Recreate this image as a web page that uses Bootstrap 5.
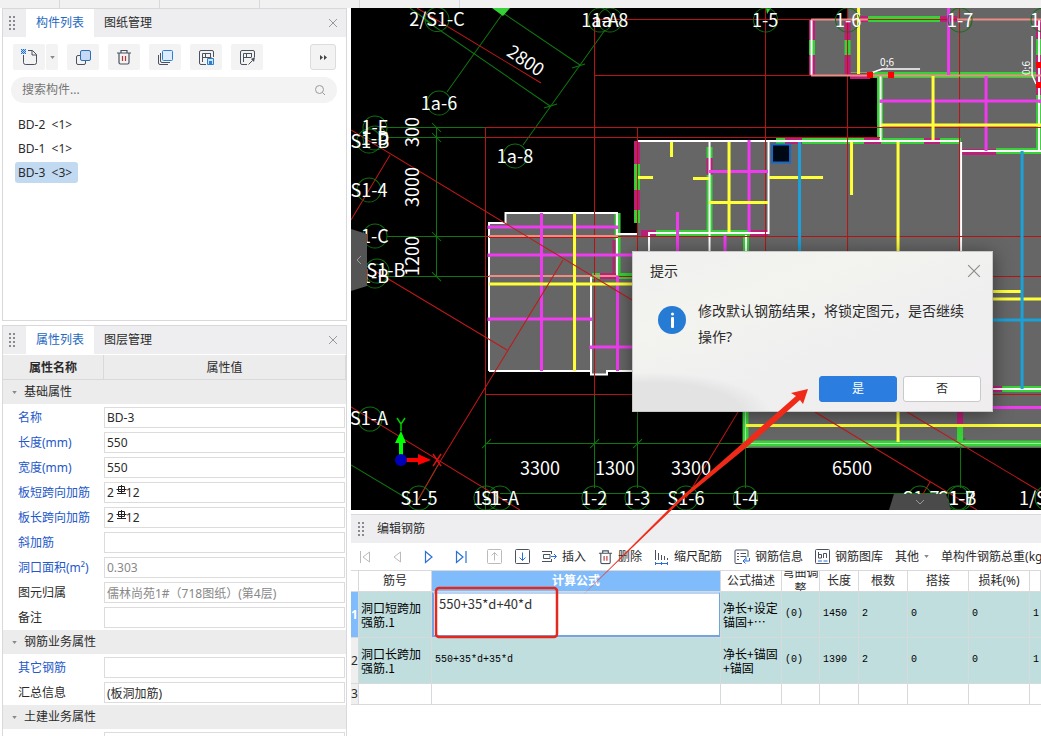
<!DOCTYPE html>
<html lang="zh-CN">
<head>
<meta charset="utf-8">
<meta name="viewport" content="width=device-width, initial-scale=1">
<title>编辑钢筋</title>
<link href="https://cdn.jsdelivr.net/npm/bootstrap@5.3.0/dist/css/bootstrap.min.css" rel="stylesheet">
<style>
:root{--ui:"Noto Sans","Noto Sans CJK SC",sans-serif;--line:#d9d9dc;--bar:#eeeef1}
body{font:12px/24px var(--ui);color:#2b2b2b;background:#fff}
button,input{font:inherit;color:inherit}
svg{display:block;flex:none}
.app{height:100vh;min-height:600px}
.ribbon{height:8px;background:#f1f1f1;flex:none}
.ribbon i{width:100px;border-right:1px solid var(--line)}
.ribbon i:first-child{width:60px}
.side{width:345px;margin-left:2px;flex:none;gap:4px}
.panel{border:1px solid var(--line)}
.components{flex:0 0 313px}
.panel-head{background:var(--bar);height:28px;padding-left:6px;flex:none}
.tab-item{border:0;background:none;padding:0 10px;height:28px;line-height:28px}
.tab-item.on{background:#fff;color:#2468c0;margin-left:11px}
.bare{border:0;background:none;padding:0}
.tools{gap:9px;padding:7px 10px}
.tool{width:32px;height:26px;border:0;border-radius:2px;background:#f3f3f3;padding:0;display:flex;align-items:center;justify-content:center}
.tool.narrow{width:12px}
.tool.more{width:26px;border:1px solid #dcdcdc;border-radius:3px}
.search{background:#f3f3f3;border-radius:13px;height:26px;margin:0 9px 0 8px;padding:0 11px}
.search input{border:0;background:none;outline:0;padding:0}
.search input::placeholder{color:#757575;opacity:1}
.names{padding:10px 12px;margin:0}
.names button{border:0;background:none;border-radius:3px;padding:0 6px 0 3px;height:21px;line-height:21px}
.names li{height:24px}
.names .on{background:#c1d9f1}
.props{table-layout:fixed;width:100%;border-collapse:separate;border-spacing:0;margin-top:1px}
.props col:first-child{width:101px}
.props thead th{height:25px;line-height:22px;padding:2px 0 0;background:#ececec;border:1px solid var(--line);border-width:0 1px 1px 0;text-align:center;font-weight:400}
.props thead th:first-child{font-weight:700}
.props tbody th{font-weight:400;height:25px;padding:0 0 0 15px;color:#2458c8;white-space:nowrap}
.props tbody th.plain{color:#2b2b2b}
.props tbody th.group{padding:0;color:#2b2b2b}
.group div{background:#ececec;height:24px;margin-bottom:1px;padding-left:9px;gap:7px}
.props td{padding:0 1px 0 0;height:25px}
.props input{display:block;width:100%;height:21px;border:1px solid #dcdcdc;border-radius:0;padding:0 2px;line-height:18px;background:#fff;outline:0}
.props input:read-only{color:#888}
.props input.steel{padding-bottom:2px}
.steel-sign{position:absolute;left:12px;top:3px}
.work{margin-left:4px;min-width:0}
.view{background:#000;min-height:0;overflow:hidden}
.cad{width:100%;height:100%}
.cad text{font:18px "Noto Sans CJK SC",sans-serif;fill:#fff;text-anchor:middle}
.fold-left{position:absolute;left:0;top:221px;width:16px;height:62px;border:0;padding:0;background:#545454;color:#999;clip-path:polygon(0 0,100% 8%,100% 92%,0 100%)}
.fold-bottom{position:absolute;left:538px;bottom:0;width:62px;height:16px;border:0;padding:0;background:#4a4a4a;clip-path:polygon(8% 0,92% 0,100% 100%,0 100%)}
.ask{position:absolute;left:281px;top:243px;width:361px;height:161px;border:1px solid #c8c8c8;box-shadow:0 3px 18px rgba(0,0,0,.45);background:radial-gradient(ellipse 116px 42px at 6% 102%,#e3e3e4 75%,transparent 100%),linear-gradient(160deg,#f0f0f0,#f3f3ef 30%,#efeff0 60%,#f0edef);padding:8px 11px 9px 17px;font-size:14px}
.ask p{line-height:26px;margin:0;width:270px}
.ask .choice{width:78px;height:26px;line-height:24px;border:1px solid #c9c9c9;border-radius:3px;background:#fff;font-size:12px;padding:0}
.ask .choice.yes{background:#2b7de0;border-color:#2b7de0;color:#fff}
.editor{flex:0 0 226px;padding-top:4px;overflow:hidden}
.editor-head{height:29px;background:var(--bar);border-top:1px solid var(--line);padding-left:7px;gap:12px}
.cmds{height:27px;white-space:nowrap;overflow:hidden;padding-left:8px}
.cmd{border:0;background:none;padding:0;display:flex;align-items:center;gap:5px;margin-right:12px;flex:none}
.nav-tools{gap:20px;margin-right:11px;flex:none}
.bars{table-layout:fixed;width:100%;border-collapse:separate;border-spacing:0;border-top:1px solid var(--line);line-height:14px}
.bars th,.bars td{border:1px solid #d6dadb;border-width:0 1px 1px 0;padding:0 2px;overflow:hidden;font-weight:400}
.bars thead th{height:21px;text-align:center;padding:0}
.bars thead th.now{background:#80bbfb;color:#fff;font-weight:700}
.bars .clip{height:20px;line-height:16px;overflow:hidden}
.bars tbody tr{height:46px}
.bars tbody tr:last-child{height:21px}
.bars tbody th{background:#efefef;padding:0;text-align:center;font-family:var(--ui)}
.bars tbody th.now{background:#80bbfb;color:#fff;font-weight:700}
.bars .filled td{background:#c1dedf;color:#000;font-family:"Noto Sans CJK SC",sans-serif}
.bars .filled td.num{font:10px/14px "Liberation Mono",monospace;padding:0 0 2px 3px;white-space:nowrap}
.bars .filled td.edit{background:#fff;padding:0}
.edit input{display:block;width:100%;height:45px;border:2px solid #6fa5e0;border-right-width:1px;border-top-color:#b9d3f0;padding:0 5px 23px;background:#fff;outline:0;color:#333;font-size:13px}
.marks{position:absolute;left:0;top:0;width:690px;height:728px;pointer-events:none;z-index:5}
</style>
</head>
<body>
<svg width="0" height="0" class="position-absolute" aria-hidden="true"><defs>
<symbol id="grip" viewBox="0 0 7 15"><path d="M0 0h2v2H0zM4 0h2v2H4zM0 4h2v2H0zM4 4h2v2H4zM0 8h2v2H0zM4 8h2v2H4zM0 12h2v2H0zM4 12h2v2H4z" fill="#8a8a8f"/></symbol>
<symbol id="close" viewBox="0 0 10 10"><path d="M1 1l8 8M9 1L1 9" stroke="#999" fill="none"/></symbol>
<symbol id="down" viewBox="0 0 6 4"><path d="M0 0h6L3 4z" fill="#888"/></symbol>
<symbol id="bin" viewBox="0 0 16 16"><path d="M1 4h14M5 4V1.500h6V4M3 4v9.500q0 1.500 1.500 1.500h7q1.500 0 1.500-1.500V4" fill="none" stroke="#4a5260" stroke-width="1.200"/><path d="M6.500 7v5M9.500 7v5" stroke="#c03030" stroke-width="1.200"/></symbol>
<symbol id="steel" viewBox="0 0 11 11"><path d="M5.500 0v9M1 8.500h9M.5 4.500h10M2.500 1.500h6v5h-6z" fill="none" stroke="#222"/></symbol>
</defs></svg>

<div class="app d-flex flex-column overflow-hidden">
<div class="ribbon d-flex"><i></i><i></i><i></i><i></i><i></i></div>
<div class="d-flex flex-grow-1" style="min-height:0">

<aside class="side d-flex flex-column">
  <section class="panel components">
    <div class="panel-head d-flex align-items-center">
      <svg width="7" height="15"><use href="#grip"/></svg>
      <button class="tab-item on" type="button" style="margin-left:10px">构件列表</button>
      <button class="tab-item" type="button">图纸管理</button>
      <button class="bare ms-auto me-1 px-1" type="button" aria-label="关闭"><svg width="10" height="10"><use href="#close"/></svg></button>
    </div>
    <div class="tools d-flex">
      <div class="d-flex gap-0">
        <button class="tool me-0" type="button" aria-label="新建"><svg width="18" height="18" fill="none"><path d="M3.500 7v7.500q0 2 2 2h9q2 0 2-2V6.500l-4-4H8M12 2.500v4.500h4.500" stroke="#4a5260"/><path d="M1 1h5v5H1z" fill="#b4d2f4"/><path d="M1 1h1v1H1zM3 1h1v1H3zM5 1h1v1H5zM2 2h1v1H2zM4 2h1v1H4zM1 3h1v1H1zM3 3h1v1H3zM5 3h1v1H5zM2 4h1v1H2zM4 4h1v1H4zM1 5h1v1H1zM3 5h1v1H3zM5 5h1v1H5z" fill="#2a70c8"/></svg></button>
        <button class="tool narrow" type="button" aria-label="更多新建" style="margin-left:1px"><svg width="5" height="3"><use href="#down"/></svg></button>
      </div>
      <button class="tool" type="button" aria-label="复制"><svg width="17" height="17" fill="none"><rect x="1.500" y="6.500" width="9" height="9" rx="1.500" stroke="#4a5260"/><rect x="5.500" y="1.500" width="10" height="10" rx="1.500" fill="#c3d9f5" stroke="#2f6db8"/></svg></button>
      <button class="tool" type="button" aria-label="删除"><svg width="16" height="16"><use href="#bin"/></svg></button>
      <button class="tool" type="button" aria-label="层间复制"><svg width="17" height="17" fill="none"><rect x="5.500" y="1.500" width="10" height="10" rx="1" fill="#dcecfc" stroke="#2f7fd0"/><path d="M3.500 4v8q0 1.500 1.500 1.500h8M1.500 6v8q0 1.500 1.500 1.500h8" stroke="#4a5260"/></svg></button>
      <button class="tool" type="button" aria-label="构件存档"><svg width="17" height="17" fill="none"><path d="M8 15.500H3q-1.500 0-1.500-1.500V3Q1.500 1.500 3 1.500h11q1.500 0 1.500 1.500v5M4.500 13V4.500H13M4.500 8.500H8M7.500 4.500v4h6M12.500 4v4" stroke="#4a5260"/><path d="M9.500 9.500h6v6h-6z" fill="#cfe4fb" stroke="#2f7fd0"/><path d="M11 12h3v3h-3z" fill="#2f7fd0"/></svg></button>
      <button class="tool" type="button" aria-label="构件提取"><svg width="17" height="17" fill="none"><path d="M8 15.500H3q-1.500 0-1.500-1.500V3Q1.500 1.500 3 1.500h11q1.500 0 1.500 1.500v5M4.500 13V4.500H13M4.500 8.500H8M7.500 4.500v4h5M12.500 4v4M9.500 15.500l4-4" stroke="#4a5260"/><path d="M12 10l4-2-1 5z" fill="#4a5260"/></svg></button>
      <button class="tool more ms-auto" type="button" aria-label="展开"><svg width="9" height="5"><path d="M1 0l3 2.500L1 5zM5 0l3 2.500L5 5z" fill="#444"/></svg></button>
    </div>
    <div class="search d-flex align-items-center justify-content-between">
      <input type="text" placeholder="搜索构件..." aria-label="搜索构件">
      <svg width="12" height="12" fill="none" stroke="#9a9a9a"><circle cx="5.500" cy="5.500" r="4"/><path d="M8.500 8.500l2.500 2.500"/></svg>
    </div>
    <ul class="names list-unstyled">
      <li><button type="button">BD-2&nbsp; &lt;1&gt;</button></li>
      <li><button type="button">BD-1&nbsp; &lt;1&gt;</button></li>
      <li><button class="on" type="button">BD-3&nbsp; &lt;3&gt;</button></li>
    </ul>
  </section>

  <section class="panel flex-grow-1 overflow-hidden border-bottom-0" style="min-height:0">
    <div class="panel-head d-flex align-items-center">
      <svg width="7" height="15"><use href="#grip"/></svg>
      <button class="tab-item on" type="button" style="margin-left:10px">属性列表</button>
      <button class="tab-item" type="button">图层管理</button>
      <button class="bare ms-auto me-1 px-1" type="button" aria-label="关闭"><svg width="10" height="10"><use href="#close"/></svg></button>
    </div>
    <table class="props">
      <colgroup><col><col></colgroup>
      <thead><tr><th>属性名称</th><th>属性值</th></tr></thead>
      <tbody>
        <tr><th class="group" colspan="2"><div class="d-flex align-items-center"><svg width="5" height="3"><use href="#down"/></svg>基础属性</div></th></tr>
        <tr><th><label for="p1">名称</label></th><td><input id="p1" type="text" value="BD-3"></td></tr>
        <tr><th><label for="p2">长度(mm)</label></th><td><input id="p2" type="text" value="550"></td></tr>
        <tr><th><label for="p3">宽度(mm)</label></th><td><input id="p3" type="text" value="550"></td></tr>
        <tr><th><label for="p4">板短跨向加筋</label></th><td><div class="position-relative"><input id="p4" class="steel" type="text" value="2　12"><svg class="steel-sign" width="11" height="11"><use href="#steel"/></svg></div></td></tr>
        <tr><th><label for="p5">板长跨向加筋</label></th><td><div class="position-relative"><input id="p5" class="steel" type="text" value="2　12"><svg class="steel-sign" width="11" height="11"><use href="#steel"/></svg></div></td></tr>
        <tr><th><label for="p6">斜加筋</label></th><td><input id="p6" type="text"></td></tr>
        <tr><th><label for="p7">洞口面积(m²)</label></th><td><input id="p7" type="text" value="0.303" readonly></td></tr>
        <tr><th class="plain"><label for="p8">图元归属</label></th><td><input id="p8" type="text" value="儒林尚苑1#（718图纸）(第4层)" readonly></td></tr>
        <tr><th class="plain"><label for="p9">备注</label></th><td><input id="p9" type="text"></td></tr>
        <tr><th class="group" colspan="2"><div class="d-flex align-items-center"><svg width="5" height="3"><use href="#down"/></svg>钢筋业务属性</div></th></tr>
        <tr><th><label for="p10">其它钢筋</label></th><td><input id="p10" type="text"></td></tr>
        <tr><th class="plain"><label for="p11">汇总信息</label></th><td><input id="p11" type="text" value="(板洞加筋)"></td></tr>
        <tr><th class="group" colspan="2"><div class="d-flex align-items-center"><svg width="5" height="3"><use href="#down"/></svg>土建业务属性</div></th></tr>
        <tr><th></th><td><input type="text" aria-label="土建属性"></td></tr>
      </tbody>
    </table>
  </section>
</aside>

<main class="work flex-grow-1 d-flex flex-column position-relative overflow-hidden">
  <div class="view flex-grow-1 position-relative">
    <svg class="cad" viewBox="351 8 690 502" preserveAspectRatio="xMinYMin slice">
      <!-- slabs -->
      <g fill="#666">
        <path d="M489 223H505V213H618V234H637V141H961V151H1041V448H745V371H607V375H591V371H489z"/>
        <path d="M811 19H848V8H1041V152H961V141H881V75H811z"/>
      </g>
      <path d="M745 412V371H607V375H632V412z" fill="#000"/>
      <!-- axis extensions -->
      <g stroke="#0f760f" fill="none">
        <path d="M503 13L447 92M503 13L580 65M605 30L523 145M425 20L550 106M387 127.500H486M387 137.500H486M387 236.500H486M436.500 127V276M387 276.500H486M485.500 395V510M594.500 395V488M637.500 395V488M486 443.500H1041M500 493.500H975M745.500 412V488M960.500 443V488M351 465L413 502M438 465L418 500M410 8L432 24"/>
        <path d="M432 123l9 9M432 133l9 9M432 232l9 9M432 272l9 9M482 448l9-9M590 448l9-9M633 448l9-9M955 448l10-10M572 68l13-4M544 108l13-4"/>
      </g>
      <!-- structural walls -->
      <g fill="none" stroke="#37d237" stroke-width="6">
        <path d="M812 40V55M847.500 40V55M868 19H940M850 75H1041M880 75V141M776 141H961M709.500 147V158M709.500 175V235M637 164V190M637 210V223M656 233H768M996 151H1041M1039 39V55M1039 95V151M617.500 213V276M592 276H632M746 235V251M745.500 412V448M745 443.500H1041M960 425V443M1002 389H1041"/>
        <path stroke="#bb1f7a" d="M812 20V40M812 55V75M847.500 20V40M847.500 55V75M860 19H868M940 19H957M850 76H870M785 141H802M864 141H881M924 141H940M961 152H996M1039 20V39M1039 55V95M637 141V164M637 190V210M709.500 158V174M641 233H656M750 233H768M600 276H618M960 412V425M993 389H1002"/>
        <path stroke="#bb1f7a" stroke-width="3" d="M614 240V276"/>
      </g>
      <!-- slab outlines -->
      <g fill="none" stroke="#fff" stroke-width="2">
        <path d="M489 371V223H505.500V213H617V234H637M489 371H591M591 276V374.500H607V371H632M637 141H959M961 142V251M961 151H1041M768.500 141V233H649V251M709.500 142V251M811.500 19V75M880.500 76V141M746 235V251M1039 20V151M617 213V276M993 389H1041"/>
        <path stroke="#a6e8a6" stroke-width="1" d="M746 443.500H1041M745.500 412V443"/>
      </g>
      <!-- axis grid -->
      <g fill="none" stroke="#b81414">
        <path d="M485.500 127V395M594.500 19V395M637.500 127V251M765.500 8V251M847.500 8V251M959.500 8V251M594 19.500H1041M594 75.500H1041M486 127.500H1041M486 137.500H880M486 236.500H1041M486 276.500H1041M486 394.500H1041"/>
        <path stroke="#ef8c84" stroke-width="2" d="M489 236H618M489 276H618M811 19.500H868M957 19.500H1041M811 75.500H1041"/>
        <path d="M489 237.500H618"/>
      </g>
      <!-- rebar -->
      <g fill="none" stroke-width="3">
        <path stroke="#ee3bee" d="M541.500 213V371M489 229v-2H617v2M489 257v-2H632M489 321v-2H591v2M617.500 276V371M591 349v-2H632M679 213.500H677.500V251M749 140V232M709 171.500H768M725 235V251M948.500 8V75M986 76V151M881 103v-2H1040v2M993 407.500H1041"/>
        <path stroke="#ffff38" d="M574.500 213V371M489 284H632M671.500 142V157M638 177.500H653M693 178.500H709M729 142V232M709 202.500H768M769 177.500H823M851.500 142V195M898 142V251M858.500 8V74M933 76V140M881 125H1041M898 412V442M746 425.500H1041M993 291.500H1021M993 299H1041"/>
        <path stroke="#1ba0d8" d="M799.500 142V251M1022 151V389M993 320H1041"/>
      </g>
      <!-- inclined axes -->
      <g fill="none" stroke="#c01818">
        <path d="M351 130L632 300M390 155L351 220M370 268L507 350M563 260L441 460L418 500M351 407L520 510M417 8L541 83M815 412L977 510M907 412L1041 492M738 412L686 498M930 482L923 494"/>
      </g>
      <path d="M871 73L882 69H920M1032 36V75L1036 84" fill="none" stroke="#fff" stroke-width="1.500"/>
      <path d="M867 72h6v6h-6zM888 72h6v6h-6zM1036 62h6v6h-6zM1036 82h6v6h-6z" fill="red"/>
      <rect x="772" y="144.500" width="18" height="18" fill="#000816" stroke="#1769c4" stroke-width="2"/>
      <path d="M492 8h18l-7 8zM766 8h5l-4 6z" fill="#37d237"/>
      <!-- axis heads -->
      <g fill="none" stroke="#116f11">
        <circle cx="437" cy="19.500" r="12"/><circle cx="600" cy="20" r="12"/><circle cx="610" cy="20" r="12"/><circle cx="765.500" cy="20" r="12"/><circle cx="847.500" cy="20" r="12"/><circle cx="960" cy="20" r="12"/><circle cx="1043" cy="20" r="12"/><circle cx="439" cy="103" r="12"/><circle cx="515" cy="156" r="12"/><circle cx="375" cy="128" r="12"/><circle cx="375" cy="138" r="12"/><circle cx="369" cy="141" r="12"/><circle cx="369" cy="190" r="12"/><circle cx="375" cy="236" r="12"/><circle cx="377" cy="271" r="12"/><circle cx="375" cy="276" r="12"/><circle cx="370" cy="419" r="12"/><circle cx="419" cy="498" r="12"/><circle cx="486" cy="498" r="12"/><circle cx="500" cy="498" r="12"/><circle cx="594" cy="498" r="12"/><circle cx="637" cy="498" r="12"/><circle cx="686" cy="498" r="12"/><circle cx="745.500" cy="498" r="12"/><circle cx="920" cy="498" r="12"/><circle cx="957" cy="498" r="12"/><circle cx="960" cy="498" r="12"/><circle cx="1047" cy="498" r="12"/>
      </g>
      <g>
        <text x="437" y="26">2/S1-C</text><text x="600" y="27">1a-A</text><text x="610" y="27">1a-8</text><text x="765" y="27">1-5</text><text x="848" y="27">1-6</text><text x="960" y="27">1-7</text><text x="1043" y="27">1-8</text>
        <text x="439" y="110">1a-6</text><text x="515" y="163">1a-8</text><text x="375" y="134">1-E</text><text x="375" y="145">1-D</text><text x="370" y="148">S1-B</text><text x="369" y="197">S1-4</text><text x="375" y="243">1-C</text><text x="386" y="277">S1-B</text><text x="375" y="283">1-B</text><text x="369" y="425">S1-A</text>
        <text x="419" y="505">S1-5</text><text x="486" y="505">1-1</text><text x="500" y="505">S1-A</text><text x="594" y="505">1-2</text><text x="637" y="505">1-3</text><text x="686" y="505">S1-6</text><text x="745" y="505">1-4</text><text x="921" y="505">S1-7</text><text x="957" y="505">S1-B</text><text x="962" y="505">1-7</text><text x="1046" y="505">1/S1-7</text>
        <text x="540" y="475">3300</text><text x="615" y="475">1300</text><text x="691" y="475">3300</text><text x="852" y="475">6500</text>
        <text transform="translate(419 132) rotate(-90)">300</text><text transform="translate(419 187) rotate(-90)">3000</text><text transform="translate(419 256) rotate(-90)">1200</text><text transform="translate(522 66) rotate(34)">2800</text>
        <text x="887" y="66" style="font-size:10px">0;6</text><text transform="translate(1030 68) rotate(-90)" style="font-size:10px">0;6</text>
      </g>
      <path d="M399 455V443h-4l6-12 5 12h-3v12z" fill="#0f0"/><path d="M406 458h12v-4l13 6-13 5v-3h-12z" fill="red"/><circle cx="401" cy="460" r="6" fill="#0000b8"/>
      <path d="M397 418l4 6 4-6M401 424v7" stroke="#0c0" stroke-width="1.500" fill="none"/><path d="M433 454l8 12M441 454l-8 12" stroke="#d11" stroke-width="1.500"/>
    </svg>
    <button class="fold-left" type="button" aria-label="收起左栏"><svg class="mx-auto" width="6" height="10" fill="none" stroke="#999"><path d="M5 1L1 5l4 4"/></svg></button>
    <button class="fold-bottom" type="button" aria-label="收起下栏"><svg class="mx-auto" width="10" height="6" fill="none" stroke="#999"><path d="M1 1l4 4 4-4"/></svg></button>
    <div class="ask d-flex flex-column" role="dialog" aria-labelledby="askTitle">
      <div class="d-flex justify-content-between align-items-center flex-shrink-0" style="height:22px">
        <span id="askTitle">提示</span>
        <button class="bare" type="button" aria-label="关闭"><svg width="14" height="14" viewBox="0 0 12 12"><path d="M1 1l10 10M11 1L1 11" stroke="#8c8c8c"/></svg></button>
      </div>
      <div class="d-flex gap-2 pt-3 ps-2 flex-grow-1">
        <svg class="me-1 mt-2" width="28" height="28"><circle cx="14" cy="14" r="14" fill="#267bd5"/><rect x="13" y="11" width="3" height="11" rx="1" fill="#fff"/><circle cx="14.500" cy="8" r="1.500" fill="#fff"/></svg>
        <p>修改默认钢筋结果，将锁定图元，是否继续操作?</p>
      </div>
      <div class="d-flex justify-content-end" style="gap:6px">
        <button class="choice yes" type="button">是</button>
        <button class="choice" type="button">否</button>
      </div>
    </div>
  </div>

  <section class="editor">
    <div class="editor-head d-flex align-items-center"><svg width="7" height="15"><use href="#grip"/></svg><span>编辑钢筋</span></div>
    <div class="cmds d-flex align-items-center">
      <div class="nav-tools d-flex">
        <button class="bare" type="button" aria-label="首条"><svg width="12" height="14" fill="none" stroke="#bbb"><path d="M1.500 1v12M10.500 2v10L4 7z"/></svg></button>
        <button class="bare" type="button" aria-label="上一条"><svg width="12" height="14" fill="none" stroke="#bbb"><path d="M9.500 2v10L3 7z"/></svg></button>
        <button class="bare" type="button" aria-label="下一条"><svg width="12" height="14" fill="none" stroke="#2a6fd6" stroke-width="1.200"><path d="M2.500 1.500v11L9 7z"/></svg></button>
        <button class="bare" type="button" aria-label="末条"><svg width="12" height="14" fill="none" stroke="#2a6fd6" stroke-width="1.200"><path d="M1.500 1.500v11L8 7zM11 1v12"/></svg></button>
        <button class="bare" type="button" aria-label="上移"><svg width="15" height="15" fill="none" stroke="#bbb"><rect x=".5" y=".5" width="14" height="14" rx="1"/><path d="M7.500 11.500v-8M4.500 6.500l3-3 3 3"/></svg></button>
        <button class="bare" type="button" aria-label="下移" style="margin-left:-7px"><svg width="15" height="15" fill="none"><rect x=".5" y=".5" width="14" height="14" rx="1" stroke="#4a5260"/><path d="M7.500 3.500v8M4.500 8.500l3 3 3-3" stroke="#2a6fd6"/></svg></button>
      </div>
      <button class="cmd" type="button"><svg width="16" height="14" fill="none"><path d="M1 1.500h10M10.500 1v3M2.500 4.500H9v4H2.500zM1 11.500h10M10.500 9v3" stroke="#4a5260"/><path d="M10 6.500h5M13 4l2.500 2.500L13 9" stroke="#2a6fd6"/></svg>插入</button>
      <button class="cmd" type="button"><svg width="15" height="16" viewBox="0 0 16 16"><use href="#bin"/></svg>删除</button>
      <button class="cmd" type="button"><svg width="15" height="16" fill="none"><path d="M1.500 1v10M4.500 4v7M7.500 6v5M10.500 7v4M13.500 9v2" stroke="#4a5260"/><path d="M1 14.500h13M1.500 13v3M7.500 13v3M13.500 13v3" stroke="#2a6fd6"/></svg>缩尺配筋</button>
      <button class="cmd" type="button"><svg width="16" height="16" fill="none"><path d="M8 14.500H2q-1 0-1-1V2q0-1 1-1h11q1 0 1 1v6M3 4.500h2M6.500 4.500H12M3 7.500h2M6.500 7.500H12M3 10.500h2" stroke="#4a5260"/><path d="M15.500 9v3H9M11.500 9.500L9 12l2.500 2.500M12 7.500v4" stroke="#2a6fd6"/></svg>钢筋信息</button>
      <button class="cmd" type="button"><svg width="15" height="15" fill="none"><rect x=".5" y=".5" width="14" height="14" rx="1" stroke="#4a5260"/><path d="M3.500 3v6h3V5.500h-3M6.500 9M8.500 9V4.500h3V9" stroke="#4a5260"/><path d="M3 12h4M8.500 12h4" stroke="#2a6fd6"/></svg>钢筋图库</button>
      <button class="cmd" type="button">其他<svg width="5" height="3"><use href="#down"/></svg></button>
      <span>单构件钢筋总重(kg</span>
    </div>
    <table class="bars">
      <colgroup><col style="width:8px"><col style="width:73px"><col style="width:289px"><col style="width:61px"><col style="width:38px"><col style="width:39px"><col style="width:49px"><col style="width:61px"><col style="width:61px"><col></colgroup>
      <thead><tr><th></th><th>筋号</th><th class="now">计算公式</th><th>公式描述</th><th><div class="clip d-flex align-items-center">弯曲调整</div></th><th>长度</th><th>根数</th><th>搭接</th><th>损耗(%)</th><th></th></tr></thead>
      <tbody>
        <tr class="filled"><th class="now">1</th><td>洞口短跨加强筋.1</td><td class="edit"><input type="text" value="550+35*d+40*d" aria-label="计算公式"></td><td>净长+设定锚固+⋯</td><td class="num">(0)</td><td class="num">1450</td><td class="num">2</td><td class="num">0</td><td class="num">0</td><td class="num border-end-0">1.</td></tr>
        <tr class="filled"><th>2</th><td>洞口长跨加强筋.1</td><td class="num">550+35*d+35*d</td><td>净长+锚固+锚固</td><td class="num">(0)</td><td class="num">1390</td><td class="num">2</td><td class="num">0</td><td class="num">0</td><td class="num border-end-0">1.</td></tr>
        <tr><th>3</th><td></td><td></td><td></td><td></td><td></td><td></td><td></td><td></td><td class="border-end-0"></td></tr>
      </tbody>
    </table>
  </section>

  <!-- callout from the edited formula to the confirm button -->
  <svg class="marks" viewBox="351 8 690 728" aria-hidden="true"><rect x="436" y="588" width="121" height="49" rx="3" fill="none" stroke="#e5281e" stroke-width="2.500"/><path d="M583 595L679 499L744 442L796 396L791 393L808 389L803 404L800 400L747 447L681 501z" fill="#f02a18"/></svg>
</main>
</div>
</div>
<script src="https://cdn.jsdelivr.net/npm/bootstrap@5.3.0/dist/js/bootstrap.bundle.min.js"></script>
</body>
</html>
